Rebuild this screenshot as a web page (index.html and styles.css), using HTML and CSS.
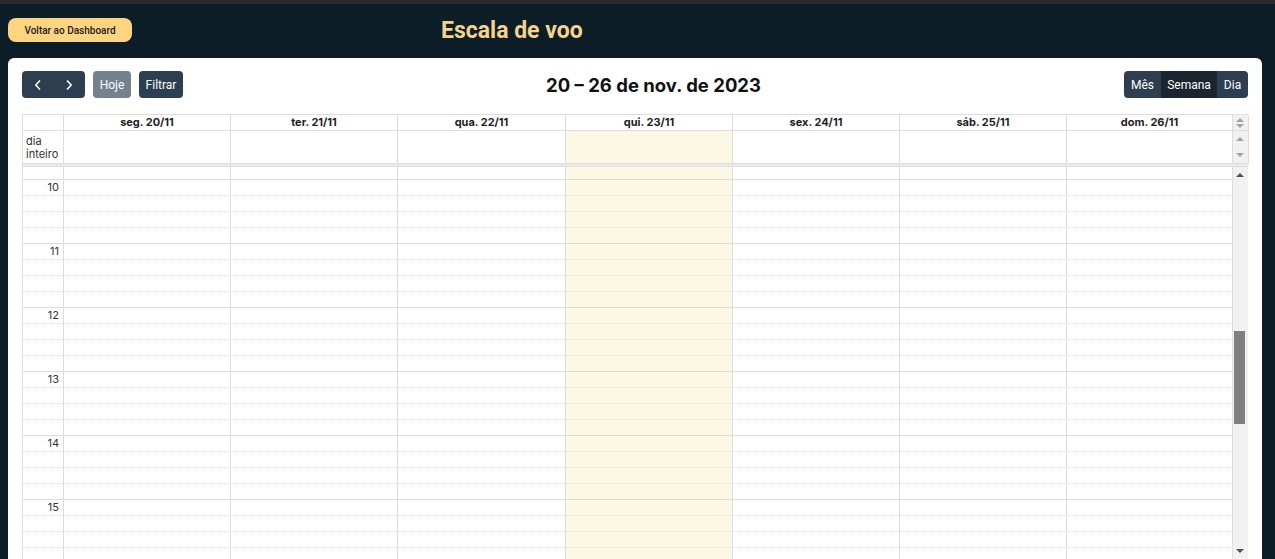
FILE: index.html
```html
<!DOCTYPE html>
<html lang="pt-BR">
<head>
<meta charset="utf-8">
<title>Escala de voo</title>
<link rel="stylesheet" href="styles.css">
</head>
<body>
<div class="strip"></div>
<header class="hdr">
  <button class="back">Voltar ao Dashboard</button>
  <h1 class="page-title">Escala de voo</h1>
</header>
<main class="card">
  <div class="toolbar">
    <div class="tb-left">
      <div class="group">
        <button class="btn nav first" aria-label="anterior"><svg width="8" height="12" viewBox="0 0 8 12"><path d="M6 1.5 L1.8 6 L6 10.5" fill="none" stroke="#fff" stroke-width="1.6"/></svg></button>
        <button class="btn nav last" aria-label="próximo"><svg width="8" height="12" viewBox="0 0 8 12"><path d="M2 1.5 L6.2 6 L2 10.5" fill="none" stroke="#fff" stroke-width="1.6"/></svg></button>
      </div>
      <button class="btn single disabled">Hoje</button>
      <button class="btn single">Filtrar</button>
    </div>
    <h2 class="range">20 – 26 de nov. de 2023</h2>
    <div class="group views">
      <button class="btn first">Mês</button>
      <button class="btn active">Semana</button>
      <button class="btn last">Dia</button>
    </div>
  </div>

  <div class="cal">
    <div class="row head">
      <div class="cell axis"></div>
      <div class="cell day">seg. 20/11</div>
      <div class="cell day">ter. 21/11</div>
      <div class="cell day">qua. 22/11</div>
      <div class="cell day">qui. 23/11</div>
      <div class="cell day">sex. 24/11</div>
      <div class="cell day">sáb. 25/11</div>
      <div class="cell day">dom. 26/11</div>
      <div class="cell gutter gutter-head"><span class="tri up light"></span><span class="tri down light"></span></div>
    </div>
    <div class="row allday">
      <div class="cell axis allday-label">dia<br>inteiro</div>
      <div class="cell"></div>
      <div class="cell"></div>
      <div class="cell"></div>
      <div class="cell today"></div>
      <div class="cell"></div>
      <div class="cell"></div>
      <div class="cell"></div>
      <div class="cell gutter gutter-allday"><span class="tri up light"></span><span class="tri down light"></span></div>
    </div>
    <div class="divider"></div>
    <div class="body">
      <div class="timegrid">
        <div class="bgcols">
          <div class="bgcol"></div>
          <div class="bgcol"></div>
          <div class="bgcol"></div>
          <div class="bgcol"></div>
          <div class="bgcol today"></div>
          <div class="bgcol"></div>
          <div class="bgcol"></div>
          <div class="bgcol"></div>
        </div>
        <div class="slots">
          <div class="slot partial"><span class="lbl"></span></div>
          <div class="slot hour"><span class="lbl">10</span></div>
          <div class="slot"><span class="lbl"></span></div>
          <div class="slot"><span class="lbl"></span></div>
          <div class="slot"><span class="lbl"></span></div>
          <div class="slot hour"><span class="lbl">11</span></div>
          <div class="slot"><span class="lbl"></span></div>
          <div class="slot"><span class="lbl"></span></div>
          <div class="slot"><span class="lbl"></span></div>
          <div class="slot hour"><span class="lbl">12</span></div>
          <div class="slot"><span class="lbl"></span></div>
          <div class="slot"><span class="lbl"></span></div>
          <div class="slot"><span class="lbl"></span></div>
          <div class="slot hour"><span class="lbl">13</span></div>
          <div class="slot"><span class="lbl"></span></div>
          <div class="slot"><span class="lbl"></span></div>
          <div class="slot"><span class="lbl"></span></div>
          <div class="slot hour"><span class="lbl">14</span></div>
          <div class="slot"><span class="lbl"></span></div>
          <div class="slot"><span class="lbl"></span></div>
          <div class="slot"><span class="lbl"></span></div>
          <div class="slot hour"><span class="lbl">15</span></div>
          <div class="slot"><span class="lbl"></span></div>
          <div class="slot"><span class="lbl"></span></div>
          <div class="slot"><span class="lbl"></span></div>
        </div>
      </div>
      <div class="gutter scroll">
        <div class="arrow"><span class="tri up dark"></span></div>
        <div class="track"><div class="thumb"></div></div>
        <div class="arrow"><span class="tri down dark"></span></div>
      </div>
    </div>
  </div>
</main>
</body>
</html>
```

FILE: styles.css
```css
* { box-sizing: border-box; }
html, body { margin: 0; height: 100%; overflow: hidden; }
body {
  background: #0c1d27;
  font-family: Inter, "Noto Sans", sans-serif;
  color: #212529;
}
.strip { height: 4px; background: #2b2b2b; }

.hdr {
  display: flex;
  align-items: center;
  padding: 14px 8px 16px;
  height: 54px;
}
.back {
  width: 124px;
  height: 24px;
  padding: 0;
  border: 0;
  border-radius: 8px;
  background: #fdd480;
  color: #1b1b26;
  font: 500 10px Roboto, "Liberation Sans", sans-serif;
}
.page-title {
  margin: 2px 0 0 309px;
  font: 700 23px Roboto, "Liberation Sans", sans-serif;
  line-height: 26px;
  color: #f5d38b;
}

.card {
  margin: 0 13px 0 8px;
  background: #fff;
  border-radius: 6px;
  padding: 13px 14px 14px;
}
.toolbar {
  display: flex;
  align-items: center;
  justify-content: space-between;
  height: 27px;
  margin-bottom: 16px;
}
.tb-left { display: flex; gap: 8px; }
.group { display: flex; }
.btn {
  height: 27px;
  padding: 0 7px;
  border: 0;
  background: #2c3e50;
  color: #fff;
  font: 400 12px Roboto, "Liberation Sans", sans-serif;
  border-radius: 0;
  display: flex;
  align-items: center;
  justify-content: center;
}
.btn.single { border-radius: 4px; }
.btn.first { border-radius: 4px 0 0 4px; }
.btn.last { border-radius: 0 4px 4px 0; }
.btn.nav { width: 31.5px; padding: 0; }
.tb-left .single.disabled { width: 38px; }
.tb-left .single:last-child { width: 44px; }
.btn.disabled { opacity: .65; }
.btn.active { background: #1a252f; }
.views .btn:first-child { width: 37px; }
.views .btn.active { width: 56px; }
.views .btn:last-child { width: 31px; }
.range {
  margin: 0;
  font: 700 18.5px Inter, "Noto Sans", sans-serif;
  letter-spacing: 0;
  color: #111;
}

.cal {
  border-left: 1px solid #ddd;
  font-family: Inter, "Noto Sans", sans-serif;
}
.row {
  display: grid;
  grid-template-columns: 41px 167px 167px 168px 167px 167px 167px 166px 16px;
}
.head { border-top: 1px solid #ddd; }
.cell {
  border-right: 1px solid #ddd;
  border-bottom: 1px solid #ddd;
}
.head .cell { height: 16px; }
.day {
  font-size: 11px;
  font-weight: 700;
  line-height: 15px;
  text-align: center;
  color: #1d2126;
}
.allday .cell { height: 33px; }
.allday-label {
  font-size: 11px;
  line-height: 13px;
  padding: 4px 0 0 3px;
  color: #333;
}
.today { background: #fcf8e3; }

.gutter {
  background: #f1f1f1;
  display: flex;
  flex-direction: column;
  align-items: center;
}
.gutter-head { justify-content: center; gap: 2px; padding-right: 1px; }
.gutter-allday { justify-content: space-between; padding: 6px 1px 6px 0; }

.tri { width: 0; height: 0; border-left: 4px solid transparent; border-right: 4px solid transparent; }
.tri.up { border-bottom: 4px solid #a3a3a3; }
.tri.down { border-top: 4px solid #a3a3a3; }
.tri.up.dark { border-bottom-color: #505050; }
.tri.down.dark { border-top-color: #505050; }

.divider {
  height: 3px;
  background: #eaeaea;
  border-bottom: 1px solid #ddd;
}

.body {
  display: grid;
  grid-template-columns: 1210px 16px;
  height: 392px;
  overflow: hidden;
}
.timegrid { position: relative; overflow: hidden; }
.bgcols {
  position: absolute;
  inset: 0;
  display: grid;
  grid-template-columns: 41px 167px 167px 168px 167px 167px 167px 166px;
}
.bgcol { border-right: 1px solid #ddd; }
.slots { position: relative; }
.slot {
  height: 16px;
  border-top: 1px dotted #ddd;
  display: grid;
  grid-template-columns: 41px 1fr;
}
.slot.hour { border-top: 1px solid #ddd; }
.slot.partial { height: 12px; border-top: 0; }
.lbl {
  font-size: 11px;
  line-height: 15px;
  text-align: right;
  padding-right: 5px;
  color: #333;
}

.scroll {
  border-right: 1px solid #ddd;
  align-items: stretch;
}
.arrow {
  height: 16px;
  display: flex;
  align-items: center;
  justify-content: center;
  padding-right: 1px;
}
.track { flex: 1; }
.thumb {
  width: 11px;
  height: 93px;
  margin: 148px 0 0 1px;
  background: #808080;
}
```
